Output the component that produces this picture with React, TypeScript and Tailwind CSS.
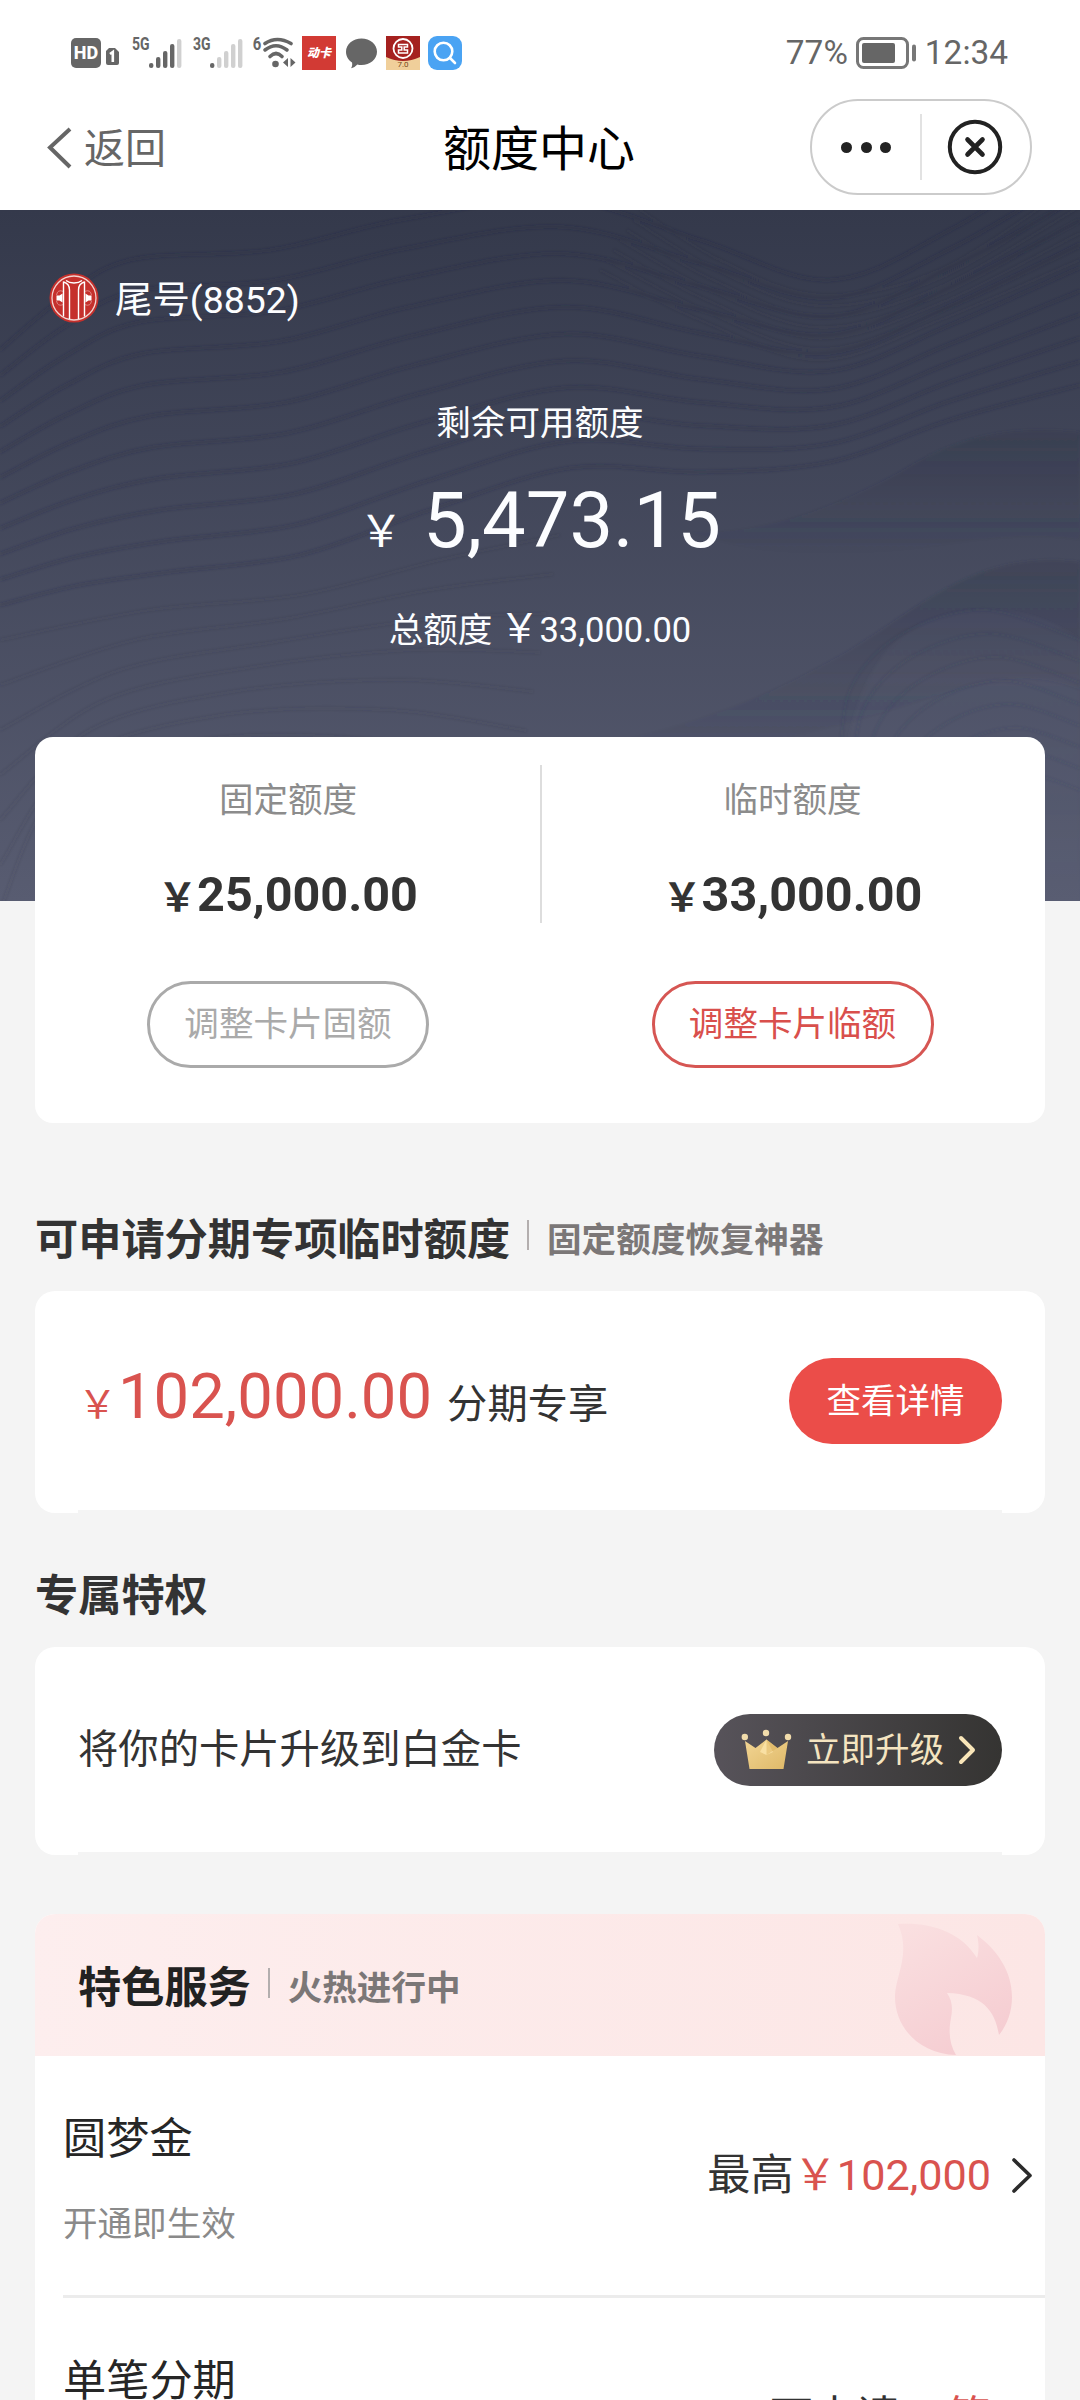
import type { ReactNode } from "react";

type Pt = [number, number];

/** Smooth curve through the points, as a cubic path. */
function curve(pts: Pt[]): string {
  let d = `M${pts[0][0]} ${pts[0][1].toFixed(1)}`;
  for (let i = 0; i < pts.length - 1; i++) {
    const p0 = pts[Math.max(0, i - 1)];
    const p1 = pts[i];
    const p2 = pts[i + 1];
    const p3 = pts[Math.min(pts.length - 1, i + 2)];
    const c1x = p1[0] + (p2[0] - p0[0]) / 6;
    const c1y = p1[1] + (p2[1] - p0[1]) / 6;
    const c2x = p2[0] - (p3[0] - p1[0]) / 6;
    const c2y = p2[1] - (p3[1] - p1[1]) / 6;
    d += `C${c1x.toFixed(1)} ${c1y.toFixed(1)} ${c2x.toFixed(1)} ${c2y.toFixed(1)} ${p2[0].toFixed(1)} ${p2[1].toFixed(1)}`;
  }
  return d;
}

/** Curves evenly blended between a first and a last one. */
function family(a: Pt[], b: Pt[], count: number): string[] {
  return Array.from({ length: count }, (_, k) => {
    const t = k / (count - 1);
    return curve(a.map(([x, y], i): Pt => [x + (b[i][0] - x) * t, y + (b[i][1] - y) * t]));
  });
}

const ridges = family(
  [[0, 140], [60, 90], [130, 50], [270, 40], [400, 10], [560, -10], [700, 30], [830, 70], [950, 20], [1080, -60]],
  [[0, 395], [80, 375], [170, 362], [300, 345], [430, 300], [570, 258], [700, 262], [830, 252], [950, 210], [1080, 175]],
  11,
);
const lowlands = family(
  [[0, 430], [150, 400], [300, 385], [440, 350], [560, 325]],
  [[0, 700], [60, 580], [200, 530], [380, 530], [520, 560]],
  7,
);
const topRight = family(
  [[640, 0], [720, 50], [820, 85], [940, 60], [1080, -30]],
  [[600, 60], [700, 110], [820, 150], [940, 110], [1080, 50]],
  7,
);
const mound = family(
  [[840, 560], [850, 480], [900, 425], [985, 400], [1080, 430]],
  [[930, 690], [940, 620], [980, 580], [1030, 565], [1080, 580]],
  8,
);

function HeroWaves() {
  return (
    <svg className="absolute inset-0 h-full w-full" viewBox="0 0 1080 691" preserveAspectRatio="none" fill="none">
      <defs>
        <linearGradient id="shade" x1="0" y1="0" x2="0" y2="1">
          <stop offset="0" stopColor="#2b3043" stopOpacity="0.26" />
          <stop offset="1" stopColor="#2b3043" stopOpacity="0" />
        </linearGradient>
        <linearGradient id="moundFill" x1="0" y1="0" x2="0" y2="1">
          <stop offset="0" stopColor="#6a6e84" stopOpacity="0.1" />
          <stop offset="1" stopColor="#6a6e84" stopOpacity="0.05" />
        </linearGradient>
        <filter id="soft" x="-5%" y="-5%" width="110%" height="110%">
          <feGaussianBlur stdDeviation="1.6" />
        </filter>
      </defs>
      <g filter="url(#soft)" stroke="#262b3d" strokeWidth="3.2">
        <g strokeOpacity="0.24">{ridges.map((d) => <path key={d} d={d} />)}</g>
        <g strokeOpacity="0.1">{topRight.map((d) => <path key={d} d={d} />)}</g>
        <g strokeOpacity="0.1">{lowlands.map((d) => <path key={d} d={d} />)}</g>
      </g>
      <path filter="url(#soft)" d="M690 322C760 325 830 300 900 262C960 225 1010 215 1080 222V330C960 310 860 380 690 322Z" fill="url(#shade)" />
      <path filter="url(#soft)" d="M560 540C700 520 780 480 850 440C930 390 980 340 1080 352V480C960 430 880 560 560 540Z" fill="url(#shade)" />
      <path filter="url(#soft)" d="M840 691C830 480 880 402 985 400C1030 400 1060 415 1080 430V691Z" fill="url(#moundFill)" />
      <g filter="url(#soft)" stroke="#2b3043" strokeWidth="2.4" strokeOpacity="0.1">
        {mound.map((d) => <path key={d} d={d} />)}
      </g>
    </svg>
  );
}

function Signal({ label, lit }: { label: string; lit: number }) {
  const bars = [[0, 26, 5], [7, 20, 11], [14, 14, 17], [21, 7, 24], [28, 2, 29]];
  return (
    <div className="flex h-[32px] w-[50px] shrink-0">
      <span className="w-[16.500px] origin-left scale-x-[0.800] text-[17.500px] leading-[20px] -translate-y-[3px] font-bold whitespace-nowrap">
        {label}
      </span>
      <svg className="h-[32px] w-[33px] shrink-0" viewBox="0 0 33 32">
        {bars.map(([x, y, h], i) => (
          <rect key={x} x={x} y={y} width="4.4" height={h} rx="2.1" fill={i < lit ? "#666" : "#d0d0d0"} />
        ))}
      </svg>
    </div>
  );
}

function StatusBar() {
  return (
    <div className="flex h-[96px] items-center pt-[10px] pl-[71px] text-[33.4px] leading-[40px] text-[#666]">
      <span className="flex h-[30px] w-[30px] items-center justify-center rounded-[5px] bg-[#666] text-[18px] leading-[22px] font-extrabold text-white">
        HD
      </span>
      <svg className="ml-[5px] h-[32px] w-[13px] shrink-0" viewBox="35 0 13 32">
        <path d="M38 11H44L48 15V26Q48 28 46 28H37Q35 28 35 26V14Z" fill="#666" />
        <path d="M39 17L41.800 15V25" stroke="#fff" strokeWidth="2.600" fill="none" />
      </svg>
      <div className="ml-[13px] flex gap-[11px]">
        <Signal label="5G" lit={4} />
        <Signal label="3G" lit={1} />
      </div>
      <span className="ml-[9px] w-[9px] -translate-y-[9px] scale-x-[0.850] text-[17.500px] leading-[20px] font-bold">6</span>
      <svg className="h-[32px] w-[36px] shrink-0" viewBox="9 0 36 32" fill="none">
        <g stroke="#666" strokeWidth="3.600" strokeLinecap="round">
          <path d="M13 6.500Q25 -1.500 39 6.500" />
          <path d="M13 13Q24 4.500 35 13" />
          <path d="M18 19.500Q24 13.500 30 19.500" />
        </g>
        <circle cx="23.500" cy="27" r="3.300" fill="#666" />
        <path d="M31 25.500L36 21V30ZM43.500 25.500L38.500 30V21Z" fill="#666" />
      </svg>
      <span className="ml-[5px] flex h-[34px] w-[34px] items-center justify-center bg-[#d23a34] text-[12px] leading-[18px] font-black text-white italic">
        动卡
      </span>
      <svg className="ml-[10px] h-[31px] w-[31px]" viewBox="0 0 31 31">
        <path d="M15.500 0.500C24 0.500 31 6.200 31 13.700S24 27 15.500 27C14 27 12.600 26.900 11.300 26.500C9.500 28.500 7.500 29.800 5 30.300C6.200 28.600 6.500 26.700 6 24.500C2.400 22 0 18.200 0 13.700C0 6.200 7 0.500 15.500 0.500Z" fill="#666" />
      </svg>
      <div className="relative ml-[9px] h-[34px] w-[34px]">
        <svg className="h-[34px] w-[34px]" viewBox="0 0 34 34" fill="none">
          <rect width="34" height="34" fill="#a5211f" />
          <path d="M0 21Q17 29 34 21V34H0Z" fill="#f0cf9a" />
          <circle cx="17" cy="12.500" r="9.500" fill="#a5211f" stroke="#fff" strokeWidth="1.800" />
          <path d="M12.500 8.500H21.500V11H18.200V14H21.500V17H12.500V14H15.800V11H12.500Z" stroke="#fff" strokeWidth="1.500" />
        </svg>
        <span className="absolute inset-x-0 bottom-0 text-center text-[8px] leading-[10px] text-[#7a4a20]">7.0</span>
      </div>
      <svg className="ml-[8px] h-[34px] w-[34px]" viewBox="0 0 34 34" fill="none">
        <rect width="34" height="34" rx="9" fill="#4aa3f3" />
        <circle cx="15.500" cy="15.500" r="8.800" stroke="#fff" strokeWidth="2.600" />
        <path d="M22 22L27 27" stroke="#fff" strokeWidth="2.600" strokeLinecap="round" />
      </svg>
      <span className="ml-auto">77%</span>
      <svg className="ml-[8px] h-[32px] w-[61px]" viewBox="0 0 61 32" fill="none">
        <rect x="1.500" y="1.500" width="50" height="29" rx="6" stroke="#777" strokeWidth="3" />
        <rect x="6" y="6" width="33" height="20" rx="2" fill="#666" />
        <rect x="56" y="7.500" width="4" height="17" rx="2" fill="#777" />
      </svg>
      <span className="mr-[72px] ml-[8px]">12:34</span>
    </div>
  );
}

function NavBar() {
  return (
    <div className="relative flex h-[114px] items-center justify-between pr-[48px] pb-[8px] pl-[46px]">
      <div className="flex items-center text-[41px] leading-[48px] text-[#666]">
        <svg className="mb-[3px] h-[44px] w-[28px]" viewBox="0 0 28 44" fill="none">
          <path d="M24 3L4 21.500L24 41" stroke="#666" strokeWidth="4" />
        </svg>
        <span className="ml-[10px]">返回</span>
      </div>
      <h1 className="absolute inset-x-0 top-[26px] mr-[2px] text-center text-[48px] leading-[56px] text-black">额度中心</h1>
      <div className="mb-[4px] flex h-[96px] w-[222px] items-center rounded-full border-2 border-[#cbcbcb]">
        <div className="flex w-[108px] items-center justify-center gap-[8.500px]">
          <i className="h-[11px] w-[11px] rounded-full bg-[#222]" />
          <i className="h-[11px] w-[11px] rounded-full bg-[#222]" />
          <i className="h-[11px] w-[11px] rounded-full bg-[#222]" />
        </div>
        <div className="h-[66px] w-[1.500px] bg-[#e2e2e2]" />
        <svg className="ml-[25px] h-[56px] w-[56px]" viewBox="0 0 56 56" fill="none" stroke="#222">
          <circle cx="28" cy="28" r="25.200" strokeWidth="4" />
          <path d="M20.500 20.500L35.500 35.500M35.500 20.500L20.500 35.500" strokeWidth="4.600" strokeLinecap="round" />
        </svg>
      </div>
    </div>
  );
}

function BankLogo() {
  return (
    <svg className="h-[50px] w-[50px]" viewBox="0 0 50 50" fill="none">
      <circle cx="25" cy="25" r="24.500" fill="#c5302c" />
      <circle cx="25" cy="25" r="22" stroke="#f3d3cf" strokeWidth="1.300" />
      <g stroke="#fff" strokeWidth="1.400">
        <path d="M14.500 8.500V43.500M35.500 8.500V43.500" />
        <path d="M14.500 9Q20.500 10.500 20.500 17V46M35.500 9Q29.500 10.500 29.500 17V46" />
        <path d="M17 7.500Q20 10 25 10Q30 10 33 7.500" />
        <path d="M14.500 18.500Q8.500 16 7.500 22M14.500 31.500Q8.500 34 7.500 28M35.500 18.500Q41.500 16 42.500 22M35.500 31.500Q41.500 34 42.500 28" strokeWidth="0.800" strokeOpacity="0.500" />
      </g>
      <path d="M7.500 22.500H10.500L13.500 20.500V29.500L10.500 27.500H7.500ZM42.500 22.500H39.500L36.500 20.500V29.500L39.500 27.500H42.500Z" fill="#fff" />
    </svg>
  );
}

function Hero() {
  return (
    <section className="relative h-[691px] bg-linear-to-b from-[#34394b] to-[#585c71] text-[#fcfdff]">
      <HeroWaves />
      <div className="relative pt-[60px]">
        <div className="flex items-center pl-[49px] text-[37.44px] leading-[52px]">
          <BankLogo />
          <span className="ml-[16px] pt-[4px]">尾号(8852)</span>
        </div>
        <div className="mt-[72px] text-center text-[34.56px] leading-[50px]">剩余可用额度</div>
        <div className="mt-[28px] flex items-baseline justify-center text-[77.76px] leading-[90px]">
          <span className="text-[44px] leading-none">￥</span>
          <span className="ml-[20px]">5,473.15</span>
        </div>
        <div className="mt-[39px] flex items-baseline justify-center text-[34.56px] leading-[50px]">
          <span>总额度</span>
          <span className="ml-[7px] text-[40px] leading-none">￥</span>
          <span>33,000.00</span>
        </div>
      </div>
    </section>
  );
}

function LimitColumn({ title, amount, action, tone, width }: { title: string; amount: string; action: string; tone: string; width: string }) {
  return (
    <div className={`flex flex-col items-center ${width}`}>
      <div className="mt-[38px] text-[34.56px] leading-[50px] text-[#8c8c8c]">{title}</div>
      <div className="mt-[42px] flex items-baseline text-[48.500px] leading-[56px] font-bold text-[#333]">
        <span className="text-[39px] leading-none">￥</span>
        <span>{amount}</span>
      </div>
      <button className={`mt-[58px] h-[87px] w-[282px] rounded-full border-3 pb-[2px] text-[34.56px] leading-[50px] ${tone}`}>{action}</button>
    </div>
  );
}

function LimitCard() {
  return (
    <section className="relative mx-[35px] -mt-[164px] flex h-[386px] rounded-[18px] bg-white">
      <LimitColumn width="w-[506px]" title="固定额度" amount="25,000.00" action="调整卡片固额" tone="border-[#aaa] text-[#aaa]" />
      <div className="-ml-px mt-[28px] h-[158px] w-[2px] bg-[#ddd]" />
      <LimitColumn width="w-[501px]" title="临时额度" amount="33,000.00" action="调整卡片临额" tone="border-[#d65653] text-[#d94f4c]" />
    </section>
  );
}

function Heading({ title, note, className }: { title: string; note?: string; className: string }) {
  return (
    <div className={`flex h-[60px] items-center ${className}`}>
      <h2 className="translate-y-[2px] text-[43.2px] leading-[60px] font-bold">{title}</h2>
      {note && (
        <>
          <i className="mr-[18px] ml-[17px] h-[30px] w-[2px] -translate-y-[4px] bg-[#b3aeae]" />
          <span className="translate-y-[1px] text-[34.56px] leading-[60px] font-bold text-[#7b7777]">{note}</span>
        </>
      )}
    </div>
  );
}

function Card({ children, className }: { children: ReactNode; className: string }) {
  return (
    <section className={`relative mx-[35px] flex items-center rounded-[20px] bg-white px-[43px] pb-[2px] ${className}`}>
      {children}
      <i className="absolute right-[43px] bottom-0 left-[43px] h-[3px] bg-[#f4f4f4]" />
    </section>
  );
}

function Crown() {
  return (
    <svg className="h-[42px] w-[52px]" viewBox="0 0 52 42">
      <defs>
        <linearGradient id="gold" x1="0" y1="0" x2="1" y2="1">
          <stop offset="0" stopColor="#f2d594" />
          <stop offset="1" stopColor="#dfb968" />
        </linearGradient>
      </defs>
      <path d="M4 12L14.500 19L25.500 10.500L36.500 19L47 12L42.500 40H8.500Z" fill="url(#gold)" />
      <path d="M25.500 10.500L32 23L25.500 26L19 23Z" fill="#f9e0a3" />
      <path d="M25.500 10.500L36.500 19L25.500 26Z" fill="#d9ac55" opacity="0.450" />
      <g fill="#f1dcab">
        <circle cx="3.800" cy="8" r="3.200" />
        <circle cx="25" cy="4" r="3.200" />
        <circle cx="47" cy="8" r="3.200" />
      </g>
    </svg>
  );
}

function Flame() {
  return (
    <svg className="absolute top-[9px] right-[32px] h-[133px] w-[120px]" viewBox="0 0 120 133">
      <defs>
        <linearGradient id="flame" x1="0.200" y1="0" x2="0.700" y2="1">
          <stop offset="0" stopColor="#fadfe0" />
          <stop offset="1" stopColor="#f5ccd1" />
        </linearGradient>
      </defs>
      <path
        d="M5 1C38 -1 68 9 84 35C86 28 86 20 84 12C104 27 119 48 119 74C119 89 114 102 106 112C102 88 90 71 54 70C59 77 60 85 58 95C55 110 57 122 63 132C26 131 1 104 2 72C3 52 18 30 5 1Z"
        fill="url(#flame)"
      />
    </svg>
  );
}

function ServiceRow({ title, note, children }: { title: string; note: string; children: ReactNode }) {
  return (
    <div className="flex h-[242px] items-start justify-between border-b-3 border-[#ececec]">
      <div>
        <div className="mt-[54px] text-[43.2px] leading-[60px] text-[#262626]">{title}</div>
        <div className="mt-[29px] text-[34.56px] leading-[50px] text-[#8a8a8a]">{note}</div>
      </div>
      <div className="mt-[90px] flex items-center pr-[12px] text-[43.2px] leading-[60px] text-[#333]">
        {children}
        <svg className="mb-[2px] ml-[20px] h-[38px] w-[22px]" viewBox="0 0 22 38" fill="none">
          <path d="M3 4L19 19.500L3 35" stroke="#2b2b2b" strokeWidth="3.600" strokeLinecap="round" strokeLinejoin="round" />
        </svg>
      </div>
    </div>
  );
}

export default function App() {
  return (
    <div className="h-[2400px] w-[1080px] overflow-hidden bg-[#f4f4f4] font-['Roboto','Noto_Sans_CJK_SC',sans-serif] text-[#333]">
      <header className="bg-white">
        <StatusBar />
        <NavBar />
      </header>
      <Hero />
      <LimitCard />

      <Heading title="可申请分期专项临时额度" note="固定额度恢复神器" className="mt-[86px] pl-[35px]" />
      <Card className="mt-[22px] h-[222px]">
        <div className="flex items-baseline pb-[10px] text-[#d9534f]">
          <span className="text-[39px] leading-none">￥</span>
          <span className="ml-px text-[63.36px] leading-[80px]">102,000.00</span>
          <span className="ml-[15px] text-[40.32px] leading-none text-[#333]">分期专享</span>
        </div>
        <button className="ml-auto h-[86px] w-[213px] rounded-full bg-[#eb4d49] text-[34.56px] leading-[50px] text-white">查看详情</button>
      </Card>

      <Heading title="专属特权" className="mt-[52px] pl-[35px]" />
      <Card className="mt-[22px] h-[208px]">
        <span className="text-[40.32px] leading-[60px]">将你的卡片升级到白金卡</span>
        <button className="ml-auto flex h-[72px] w-[288px] items-center rounded-full bg-linear-to-r from-[#57535a] to-[#353432] pl-[27px] text-[34.56px] leading-[50px] text-[#f4e4c0]">
          <Crown />
          <span className="ml-[13px]">立即升级</span>
          <svg className="ml-[14px] h-[32px] w-[20px]" viewBox="0 0 20 32" fill="none">
            <path d="M3 4L15 16L3 28" stroke="#f9e6b9" strokeWidth="4" strokeLinecap="round" strokeLinejoin="round" />
          </svg>
        </button>
      </Card>

      <section className="mx-[35px] mt-[59px] overflow-hidden rounded-t-[20px] bg-white">
        <div className="relative h-[142px] bg-linear-to-r from-[#fdeeee] to-[#fce6e5] pt-[43px] text-[#222]">
          <Flame />
          <Heading title="特色服务" note="火热进行中" className="pl-[43px]" />
        </div>
        <div className="pl-[28px]">
          <ServiceRow title="圆梦金" note="开通即生效">
            <span>最高</span>
            <span className="text-[#d9534f]">￥102,000</span>
          </ServiceRow>
          <ServiceRow title="单笔分期" note="账单更轻松">
            <span>可申请</span>
            <span className="text-[#d9534f]">10笔</span>
          </ServiceRow>
        </div>
      </section>
    </div>
  );
}
